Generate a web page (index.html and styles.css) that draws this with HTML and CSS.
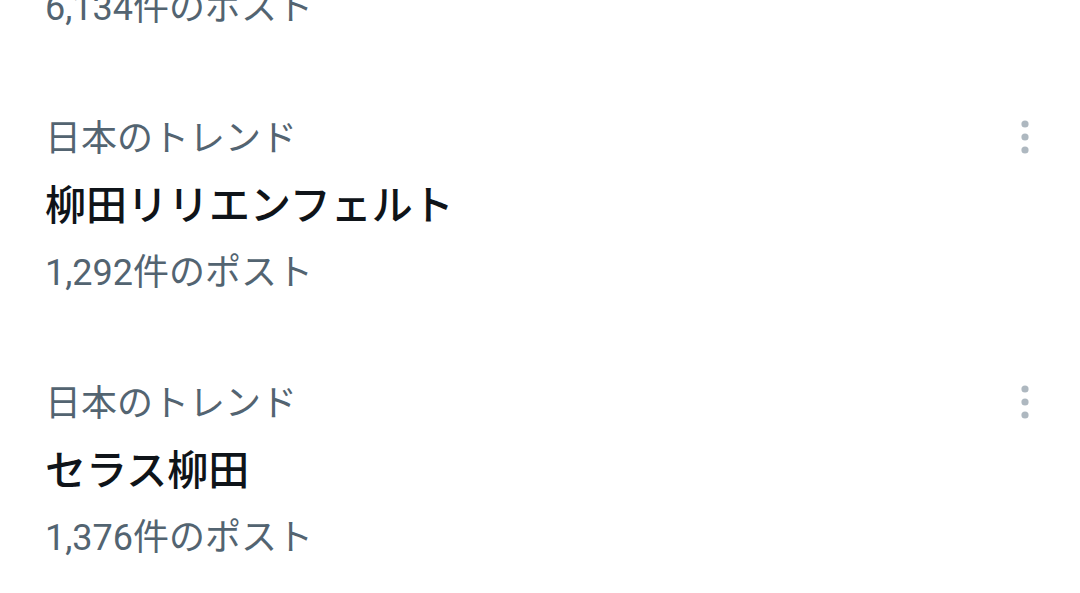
FILE: index.html
```html
<!doctype html>
<html lang="ja">
  <head>
    <meta charset="UTF-8" />
    <meta name="viewport" content="width=device-width, initial-scale=1.0" />
    <title>トレンド</title>
    <link rel="stylesheet" href="styles.css">
  </head>
  <body>
    <div class="feed">
      <div class="trend trend-cut">
        <div class="count">6,134件のポスト</div>
      </div>

      <div class="trend">
        <div class="trend-head">
          <span class="category">日本のトレンド</span>
          <button type="button" class="more" aria-label="その他">
            <svg viewBox="0 0 24 40" width="24" height="40">
              <circle cx="12" cy="4" r="3.6"></circle>
              <circle cx="12" cy="17" r="3.6"></circle>
              <circle cx="12" cy="30" r="3.6"></circle>
            </svg>
          </button>
        </div>
        <div class="title">柳田リリエンフェルト</div>
        <div class="count">1,292件のポスト</div>
      </div>

      <div class="trend">
        <div class="trend-head">
          <span class="category">日本のトレンド</span>
          <button type="button" class="more" aria-label="その他">
            <svg viewBox="0 0 24 40" width="24" height="40">
              <circle cx="12" cy="4" r="3.6"></circle>
              <circle cx="12" cy="17" r="3.6"></circle>
              <circle cx="12" cy="30" r="3.6"></circle>
            </svg>
          </button>
        </div>
        <div class="title">セラス柳田</div>
        <div class="count">1,376件のポスト</div>
      </div>
    </div>
  </body>
</html>
```

FILE: styles.css
```css
* {
  margin: 0;
  padding: 0;
  box-sizing: border-box;
}

html,
body {
  background-color: #ffffff;
  color: #0f1419;
  font-family: Roboto, "Noto Sans CJK JP", "Noto Sans", sans-serif;
  overflow: hidden;
}

.feed {
  margin-top: -25px;
}

.trend {
  padding: 32px 43px 32px 45px;
}

.trend-cut {
  padding-top: 0;
}

.trend-head {
  display: flex;
  align-items: center;
  justify-content: space-between;
  height: 67px;
}

.category,
.count {
  font-size: 36px;
  line-height: 67px;
  color: #536471;
}

.title {
  font-size: 41px;
  line-height: 67px;
  font-weight: 500;
  color: #0f1419;
}

.more {
  display: flex;
  background: none;
  border: none;
  cursor: pointer;
  fill: #aeb8c0;
}
```
